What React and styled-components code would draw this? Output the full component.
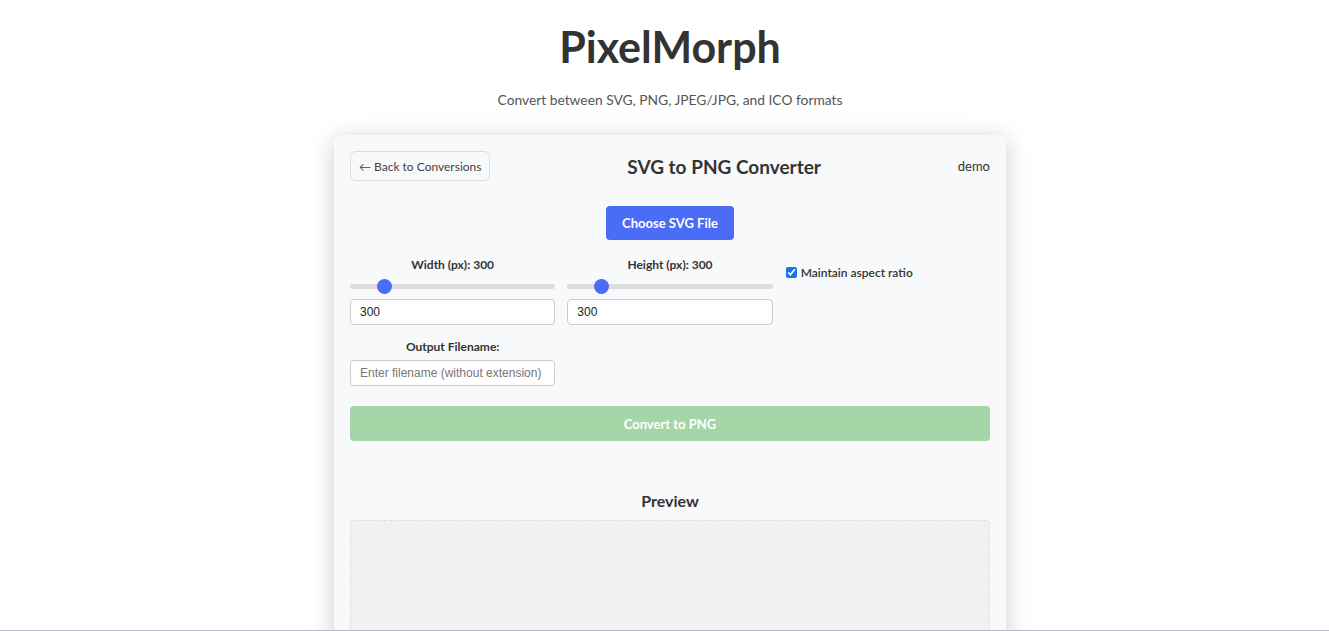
import React, { useState } from "react";
import styled, { createGlobalStyle } from "styled-components";

const GlobalStyle = createGlobalStyle`
  body {
    margin: 0;
    background: #ffffff;
    font-family: Lato, "Noto Sans", sans-serif;
    color: #333;
  }
`;

const Page = styled.div({
  display: "flex",
  flexDirection: "column",
  alignItems: "center",
  paddingTop: "22px",
  paddingLeft: "11px",
});

const Title = styled.h1({
  margin: 0,
  fontSize: "43px",
  lineHeight: "50px",
  fontWeight: 700,
  color: "#333",
});

const Subtitle = styled.p({
  margin: "19px 0 0",
  fontSize: "13.8px",
  lineHeight: "18px",
  color: "#555",
});

const Card = styled.div({
  marginTop: "26px",
  width: "672px",
  boxSizing: "border-box",
  padding: "16px",
  background: "#f8f9fa",
  borderRadius: "8px",
  boxShadow: "0 4px 24px rgba(0, 0, 0, 0.2)",
});

const Header = styled.div({
  display: "flex",
  alignItems: "center",
  justifyContent: "space-between",
});

const BackButton = styled.button({
  height: "30px",
  padding: "0 8px",
  border: "1px solid #ddd",
  borderRadius: "6px",
  background: "#f8f9fa",
  color: "#444",
  fontFamily: "inherit",
  fontSize: "12px",
  cursor: "pointer",
});

const CardTitle = styled.h2({
  margin: 0,
  fontSize: "19px",
  fontWeight: 700,
  color: "#333",
});

const User = styled.span({
  fontSize: "13px",
  color: "#333",
});

const Center = styled.div({
  display: "flex",
  justifyContent: "center",
  marginTop: "25px",
});

const PrimaryButton = styled.button({
  height: "34px",
  padding: "0 16px",
  border: "none",
  borderRadius: "4px",
  background: "#4a6cf7",
  color: "#fff",
  fontFamily: "inherit",
  fontSize: "13px",
  fontWeight: 700,
  cursor: "pointer",
});

const Grid = styled.div({
  display: "grid",
  gridTemplateColumns: "repeat(3, 1fr)",
  columnGap: "12px",
  rowGap: "14px",
  marginTop: "17px",
});

const Field = styled.div({
  display: "flex",
  flexDirection: "column",
});

const Label = styled.label({
  textAlign: "center",
  fontSize: "12px",
  fontWeight: 700,
  lineHeight: "16px",
  color: "#333",
});

const Range = styled.input.attrs({ type: "range" })({
  appearance: "none",
  WebkitAppearance: "none",
  width: "100%",
  height: "5px",
  margin: "11px 0 10px",
  background: "#ddd",
  borderRadius: "3px",
  outline: "none",
  "&::-webkit-slider-thumb": {
    WebkitAppearance: "none",
    width: "15px",
    height: "15px",
    borderRadius: "50%",
    background: "#4a6cf7",
    border: "none",
  },
});

const TextInput = styled.input({
  height: "26px",
  boxSizing: "border-box",
  padding: "0 9px",
  border: "1px solid #ccc",
  borderRadius: "4px",
  background: "#fff",
  fontFamily: '"Liberation Sans", Arial, sans-serif',
  fontSize: "12px",
  color: "#222",
  "&::placeholder": { color: "#777" },
});

const FilenameInput = styled(TextInput)({
  marginTop: "5px",
});

const CheckRow = styled.label({
  display: "flex",
  alignItems: "center",
  gap: "4px",
  paddingTop: "8px",
  paddingLeft: "1px",
  fontSize: "12px",
  fontWeight: 600,
  color: "#333",
  alignSelf: "start",
});

const Check = styled.input.attrs({ type: "checkbox" })({
  margin: 0,
  width: "11px",
  height: "11px",
  accentColor: "#1a73e8",
});

const ConvertButton = styled.button({
  width: "100%",
  height: "35px",
  marginTop: "20px",
  border: "none",
  borderRadius: "4px",
  background: "#a5d6a7",
  color: "#fff",
  fontFamily: "inherit",
  fontSize: "13px",
  fontWeight: 700,
});

const PreviewTitle = styled.h3({
  margin: "50px 0 0",
  textAlign: "center",
  fontSize: "16px",
  lineHeight: "20px",
  fontWeight: 700,
  color: "#333",
});

const PreviewBox = styled.div({
  marginTop: "9px",
  height: "300px",
  border: "1px dashed #ddd",
  borderRadius: "4px",
  background: "#f1f1f1",
});

const BottomEdge = styled.div({
  position: "fixed",
  left: 0,
  right: 0,
  bottom: 0,
  height: "1px",
  background: "#b2bac6",
});

const SizeField = ({ label, value, onChange }) => (
  <Field>
    <Label>
      {label}: {value}
    </Label>
    <Range
      min={16}
      max={2048}
      value={value}
      onChange={(e) => onChange(Number(e.target.value))}
    />
    <TextInput
      value={value}
      onChange={(e) => onChange(Number(e.target.value) || 0)}
    />
  </Field>
);

const App = () => {
  const [width, setWidth] = useState(300);
  const [height, setHeight] = useState(300);
  const [keepRatio, setKeepRatio] = useState(true);

  return (
    <>
      <GlobalStyle />
      <Page>
        <Title>PixelMorph</Title>
        <Subtitle>Convert between SVG, PNG, JPEG/JPG, and ICO formats</Subtitle>
        <Card>
          <Header>
            <BackButton>← Back to Conversions</BackButton>
            <CardTitle>SVG to PNG Converter</CardTitle>
            <User>demo</User>
          </Header>
          <Center>
            <PrimaryButton>Choose SVG File</PrimaryButton>
          </Center>
          <Grid>
            <SizeField label="Width (px)" value={width} onChange={setWidth} />
            <SizeField label="Height (px)" value={height} onChange={setHeight} />
            <CheckRow>
              <Check
                checked={keepRatio}
                onChange={(e) => setKeepRatio(e.target.checked)}
              />
              Maintain aspect ratio
            </CheckRow>
            <Field>
              <Label>Output Filename:</Label>
              <FilenameInput placeholder="Enter filename (without extension)" />
            </Field>
          </Grid>
          <ConvertButton disabled>Convert to PNG</ConvertButton>
          <PreviewTitle>Preview</PreviewTitle>
          <PreviewBox />
        </Card>
      </Page>
      <BottomEdge />
    </>
  );
};

export default App;
